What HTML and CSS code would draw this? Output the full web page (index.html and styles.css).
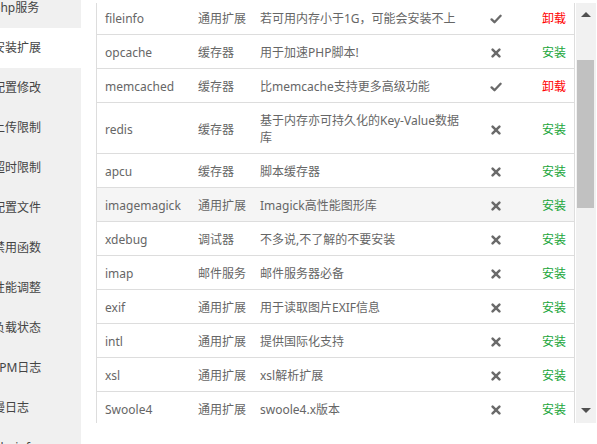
FILE: index.html
```html
<!DOCTYPE html>
<html lang="zh-CN">
<head>
<meta charset="utf-8">
<title>安装扩展</title>
<link rel="stylesheet" href="styles.css">
</head>
<body>
<div class="page">
  <aside class="menu">
    <ul class="menu-list">
      <li class="menu-item">php服务</li>
      <li class="menu-item active">安装扩展</li>
      <li class="menu-item">配置修改</li>
      <li class="menu-item">上传限制</li>
      <li class="menu-item">超时限制</li>
      <li class="menu-item">配置文件</li>
      <li class="menu-item">禁用函数</li>
      <li class="menu-item">性能调整</li>
      <li class="menu-item">负载状态</li>
      <li class="menu-item">FPM日志</li>
      <li class="menu-item">慢日志</li>
      <li class="menu-item">phpinfo</li>
    </ul>
  </aside>
  <main class="content">
    <div class="table-box">
      <table class="ext-table">
        <colgroup>
          <col class="c-name"><col class="c-type"><col class="c-desc"><col class="c-status"><col class="c-act">
        </colgroup>
        <tbody>
          <tr><td>fileinfo</td><td>通用扩展</td><td class="desc">若可用内存小于1G，可能会安装不上</td><td class="st"><svg class="ico" viewBox="0 0 12 10"><path class="ck" d="M1.6 5.4 L4.5 8.2 L10.6 1.8" /></svg></td><td class="act"><a class="del">卸载</a></td></tr>
          <tr><td>opcache</td><td>缓存器</td><td class="desc">用于加速PHP脚本!</td><td class="st"><svg class="ico" viewBox="0 0 12 10"><path d="M2.6 1.6 L9.4 8.4 M9.4 1.6 L2.6 8.4" /></svg></td><td class="act"><a class="ins">安装</a></td></tr>
          <tr><td>memcached</td><td>缓存器</td><td class="desc">比memcache支持更多高级功能</td><td class="st"><svg class="ico" viewBox="0 0 12 10"><path class="ck" d="M1.6 5.4 L4.5 8.2 L10.6 1.8" /></svg></td><td class="act"><a class="del">卸载</a></td></tr>
          <tr><td>redis</td><td>缓存器</td><td class="desc">基于内存亦可持久化的Key-Value数据库</td><td class="st"><svg class="ico" viewBox="0 0 12 10"><path d="M2.6 1.6 L9.4 8.4 M9.4 1.6 L2.6 8.4" /></svg></td><td class="act"><a class="ins">安装</a></td></tr>
          <tr><td>apcu</td><td>缓存器</td><td class="desc">脚本缓存器</td><td class="st"><svg class="ico" viewBox="0 0 12 10"><path d="M2.6 1.6 L9.4 8.4 M9.4 1.6 L2.6 8.4" /></svg></td><td class="act"><a class="ins">安装</a></td></tr>
          <tr class="hover"><td>imagemagick</td><td>通用扩展</td><td class="desc">Imagick高性能图形库</td><td class="st"><svg class="ico" viewBox="0 0 12 10"><path d="M2.6 1.6 L9.4 8.4 M9.4 1.6 L2.6 8.4" /></svg></td><td class="act"><a class="ins">安装</a></td></tr>
          <tr><td>xdebug</td><td>调试器</td><td class="desc">不多说,不了解的不要安装</td><td class="st"><svg class="ico" viewBox="0 0 12 10"><path d="M2.6 1.6 L9.4 8.4 M9.4 1.6 L2.6 8.4" /></svg></td><td class="act"><a class="ins">安装</a></td></tr>
          <tr><td>imap</td><td>邮件服务</td><td class="desc">邮件服务器必备</td><td class="st"><svg class="ico" viewBox="0 0 12 10"><path d="M2.6 1.6 L9.4 8.4 M9.4 1.6 L2.6 8.4" /></svg></td><td class="act"><a class="ins">安装</a></td></tr>
          <tr><td>exif</td><td>通用扩展</td><td class="desc">用于读取图片EXIF信息</td><td class="st"><svg class="ico" viewBox="0 0 12 10"><path d="M2.6 1.6 L9.4 8.4 M9.4 1.6 L2.6 8.4" /></svg></td><td class="act"><a class="ins">安装</a></td></tr>
          <tr><td>intl</td><td>通用扩展</td><td class="desc">提供国际化支持</td><td class="st"><svg class="ico" viewBox="0 0 12 10"><path d="M2.6 1.6 L9.4 8.4 M9.4 1.6 L2.6 8.4" /></svg></td><td class="act"><a class="ins">安装</a></td></tr>
          <tr><td>xsl</td><td>通用扩展</td><td class="desc">xsl解析扩展</td><td class="st"><svg class="ico" viewBox="0 0 12 10"><path d="M2.6 1.6 L9.4 8.4 M9.4 1.6 L2.6 8.4" /></svg></td><td class="act"><a class="ins">安装</a></td></tr>
          <tr><td>Swoole4</td><td>通用扩展</td><td class="desc">swoole4.x版本</td><td class="st"><svg class="ico" viewBox="0 0 12 10"><path d="M2.6 1.6 L9.4 8.4 M9.4 1.6 L2.6 8.4" /></svg></td><td class="act"><a class="ins">安装</a></td></tr>
        </tbody>
      </table>
    </div>
    <div class="scrollbar">
      <div class="sb-btn"><span class="tri-up"></span></div>
      <div class="sb-track"><div class="sb-thumb"></div></div>
      <div class="sb-btn"><span class="tri-down"></span></div>
    </div>
  </main>
</div>
</body>
</html>
```

FILE: styles.css
```css
* { box-sizing: border-box; }
html, body {
  margin: 0;
  padding: 0;
  background: #fff;
  font-family: "Noto Sans", "Noto Sans CJK SC", sans-serif;
  font-size: 12px;
}
.page {
  display: flex;
  width: 597px;
  height: 444px;
  overflow: hidden;
}
.menu {
  width: 81px;
  flex: none;
  background: #f0f0f0;
  overflow: hidden;
}
.menu-list {
  list-style: none;
  margin: -12px 0 0 0;
  padding: 0;
}
.menu-item {
  height: 40px;
  line-height: 40px;
  color: #444;
  white-space: nowrap;
  text-indent: -7px;
}
.menu-item.active {
  background: #fff;
}
.content {
  flex: 1;
  display: flex;
  align-items: flex-start;
  padding: 3px 0 0 15px;
}
.table-box {
  width: 479px;
  height: 420px;
  overflow: hidden;
  border-left: 1px solid #ddd;
  border-right: 1px solid #ddd;
  flex: none;
}
.ext-table {
  width: 477px;
  margin-top: -2px;
  border-collapse: collapse;
  table-layout: fixed;
  color: #666;
}
.c-name { width: 93px; }
.c-type { width: 62px; }
.c-desc { width: 224px; }
.c-status { width: 40px; }
.c-act { width: 58px; }
.ext-table td {
  padding: 9px 0 7px 8px;
  line-height: 17px;
  border-bottom: 1px solid #ddd;
  vertical-align: middle;
  white-space: nowrap;
}
.ext-table td.desc {
  white-space: normal;
  padding-right: 16px;
}
.ext-table td.st {
  text-align: center;
  padding-left: 0;
}
.ext-table td.act {
  text-align: right;
  padding-right: 8px;
}
.ext-table tr.hover td {
  background: #f5f5f5;
}
.ico {
  width: 12px;
  height: 10px;
  vertical-align: -1px;
  fill: none;
  stroke: #6a6a6a;
  stroke-width: 2.5;
  stroke-linecap: round;
  stroke-linejoin: round;
}
.ico .ck {
  stroke-width: 2.3;
}
.del { color: #f00; }
.ins { color: #20a53a; }
.scrollbar {
  width: 20px;
  height: 420px;
  margin-left: 1px;
  background: #f1f1f1;
  display: flex;
  flex-direction: column;
  flex: none;
}
.sb-btn {
  display: flex;
  align-items: center;
  justify-content: center;
  flex: none;
}
.sb-btn:first-child { height: 22px; }
.sb-btn:last-child { height: 26px; }
.sb-track {
  flex: 1;
  padding-top: 35px;
}
.sb-thumb {
  height: 148px;
  margin: 0 2px 0 1px;
  background: #c1c1c1;
}
.tri-up {
  width: 0; height: 0;
  border-left: 5px solid transparent;
  border-right: 5px solid transparent;
  border-bottom: 5px solid #505050;
}
.tri-down {
  width: 0; height: 0;
  border-left: 5px solid transparent;
  border-right: 5px solid transparent;
  border-top: 5px solid #505050;
}
```
